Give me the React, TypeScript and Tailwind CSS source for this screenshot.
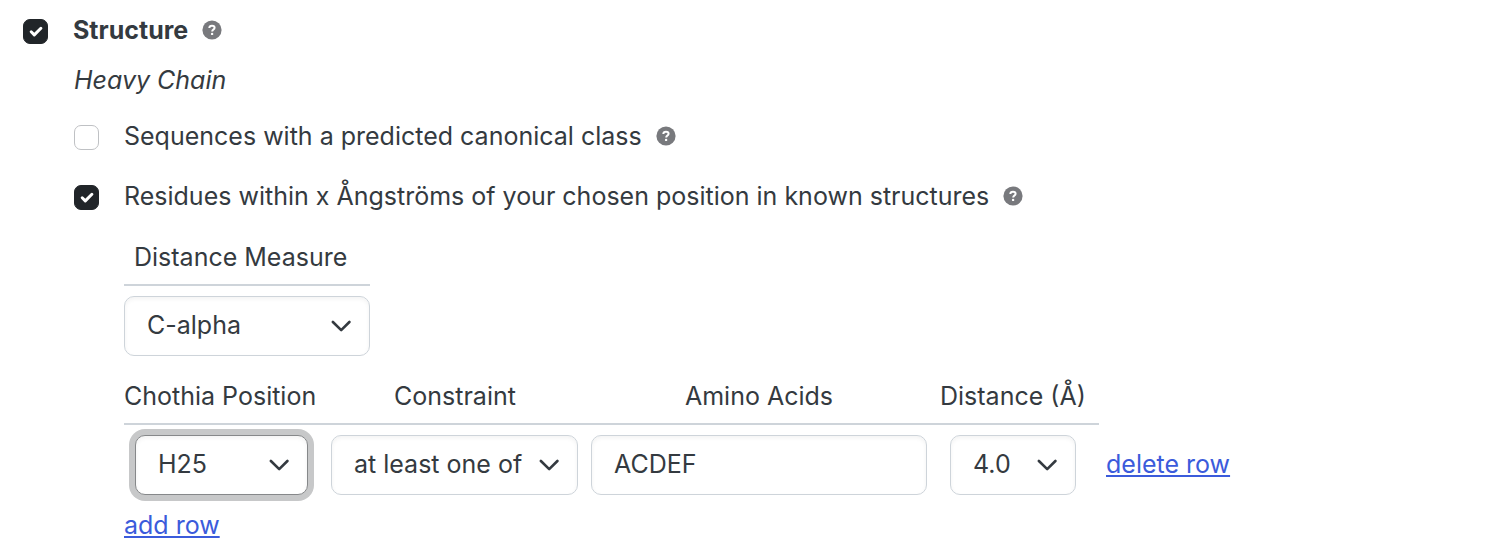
import type { ReactNode } from 'react'

const fieldBase =
  'block h-[60px] w-full appearance-none rounded-[10px] border bg-white px-[22px] pb-0.5 leading-8 text-[#343a40] shadow-[inset_0_2px_4px_rgba(0,0,0,0.05)] outline-none'

const linkClass = 'text-[#3b5bdb] underline decoration-2 underline-offset-2'

// ─── Question mark badge ─────────────────────────────────────────────────────
function HelpIcon() {
  return (
    <svg viewBox="0 0 20 20" className="mb-px size-5 shrink-0" aria-hidden="true">
      <circle cx="10" cy="10" r="9.6" fill="#78797d" />
      <path d="M7.3 8C7.4 6.6 8.5 5.8 10 5.8c1.6 0 2.6.8 2.6 2 0 .9-.5 1.4-1.3 1.9-.8.5-1.1.8-1.1 1.7" fill="none" stroke="#fff" strokeWidth="2" />
      <circle cx="10.1" cy="13.9" r="1.2" fill="#fff" />
    </svg>
  )
}

// ─── Checkbox with label and help ────────────────────────────────────────────
function Option({ id, checked, children }: { id: string; checked?: boolean; children: ReactNode }) {
  return (
    <div className="flex items-center">
      <span className="relative mt-0.5 flex size-[25px] shrink-0">
        <input
          id={id}
          type="checkbox"
          defaultChecked={checked}
          className="peer size-[25px] appearance-none rounded-[7px] border border-[#bfc1c4] bg-white checked:border-[#212529] checked:bg-[#212529]"
        />
        <svg viewBox="0 0 25 25" className="pointer-events-none absolute inset-0 hidden peer-checked:block" aria-hidden="true">
          <path d="M8.2 12.8l3.1 3.1 6.6-6.6" fill="none" stroke="#fff" strokeWidth="3" strokeLinecap="round" strokeLinejoin="round" />
        </svg>
      </span>
      <label htmlFor={id} className="mr-[14px] ml-[25px]">
        {children}
      </label>
      <HelpIcon />
    </div>
  )
}

// ─── Drop-down ───────────────────────────────────────────────────────────────
function Select({ label, value, focused }: { label: string; value: string; focused?: boolean }) {
  return (
    <div className="relative">
      <select
        aria-label={label}
        defaultValue={value}
        className={`${fieldBase} ${focused ? 'border-[#86888a] ring-[6px] ring-[#c7c8c9]' : 'border-[#ced4da]'}`}
      >
        <option>{value}</option>
      </select>
      <svg viewBox="0 0 20 12" className="pointer-events-none absolute top-6 right-[19px] h-3 w-5" aria-hidden="true">
        <path d="M1.9 2L10.2 10.2l8.2-8.2" fill="none" stroke="#343a40" strokeWidth="2.6" strokeLinecap="round" strokeLinejoin="round" />
      </svg>
    </div>
  )
}

export default function App() {
  return (
    <main className="min-h-screen bg-white px-[23px] pt-[14px] font-['Inter',sans-serif] text-[25px] leading-8 text-[#343a40]">
      <Option id="structure" checked>
        <span className="font-bold">Structure</span>
      </Option>
      <section className="ml-[51px]">
        <p className="mt-[18px] italic">Heavy Chain</p>
        <div className="mt-6">
          <Option id="canonical">Sequences with a predicted canonical class</Option>
        </div>
        <div className="mt-7">
          <Option id="residues" checked>
            Residues within x Ångströms of your chosen position in known structures
          </Option>
        </div>

        <div className="ml-[50px]">
          <div className="mt-[29px] w-[246px]">
            <h2 className="border-b-2 border-[#ced4da] px-[10px] pb-[11px]">Distance Measure</h2>
            <div className="mt-[10px]">
              <Select label="Distance Measure" value="C-alpha" />
            </div>
          </div>

          <table className="mt-6 border-collapse">
            <thead>
              <tr>
                <th className="w-[201px] border-b-2 border-[#ced4da] pb-[11px] text-left font-normal whitespace-nowrap">Chothia Position</th>
                <th className="w-[260px] border-b-2 border-[#ced4da] pb-[11px] font-normal">Constraint</th>
                <th className="w-[348px] border-b-2 border-[#ced4da] pb-[11px] font-normal">Amino Acids</th>
                <th className="w-[166px] border-b-2 border-[#ced4da] pb-[11px] pl-[7px] text-left font-normal whitespace-nowrap">Distance (Å)</th>
                <td />
              </tr>
            </thead>
            <tbody>
              <tr>
                <td className="pt-[10px] pr-[17px] pl-[11px]">
                  <Select label="Chothia Position" value="H25" focused />
                </td>
                <td className="pt-[10px] pr-[7px] pl-[6px]">
                  <Select label="Constraint" value="at least one of" />
                </td>
                <td className="pt-[10px] pr-[6px] pl-[6px]">
                  <input aria-label="Amino Acids" defaultValue="ACDEF" className={`${fieldBase} border-[#ced4da]`} />
                </td>
                <td className="pt-[10px] pr-[23px] pl-[17px]">
                  <Select label="Distance" value="4.0" />
                </td>
                <td className="pt-2 pl-[7px] whitespace-nowrap">
                  <a href="#delete" className={linkClass}>delete row</a>
                </td>
              </tr>
            </tbody>
          </table>
          <div className="mt-[14px]">
            <a href="#add" className={linkClass}>add row</a>
          </div>
        </div>
      </section>
    </main>
  )
}
